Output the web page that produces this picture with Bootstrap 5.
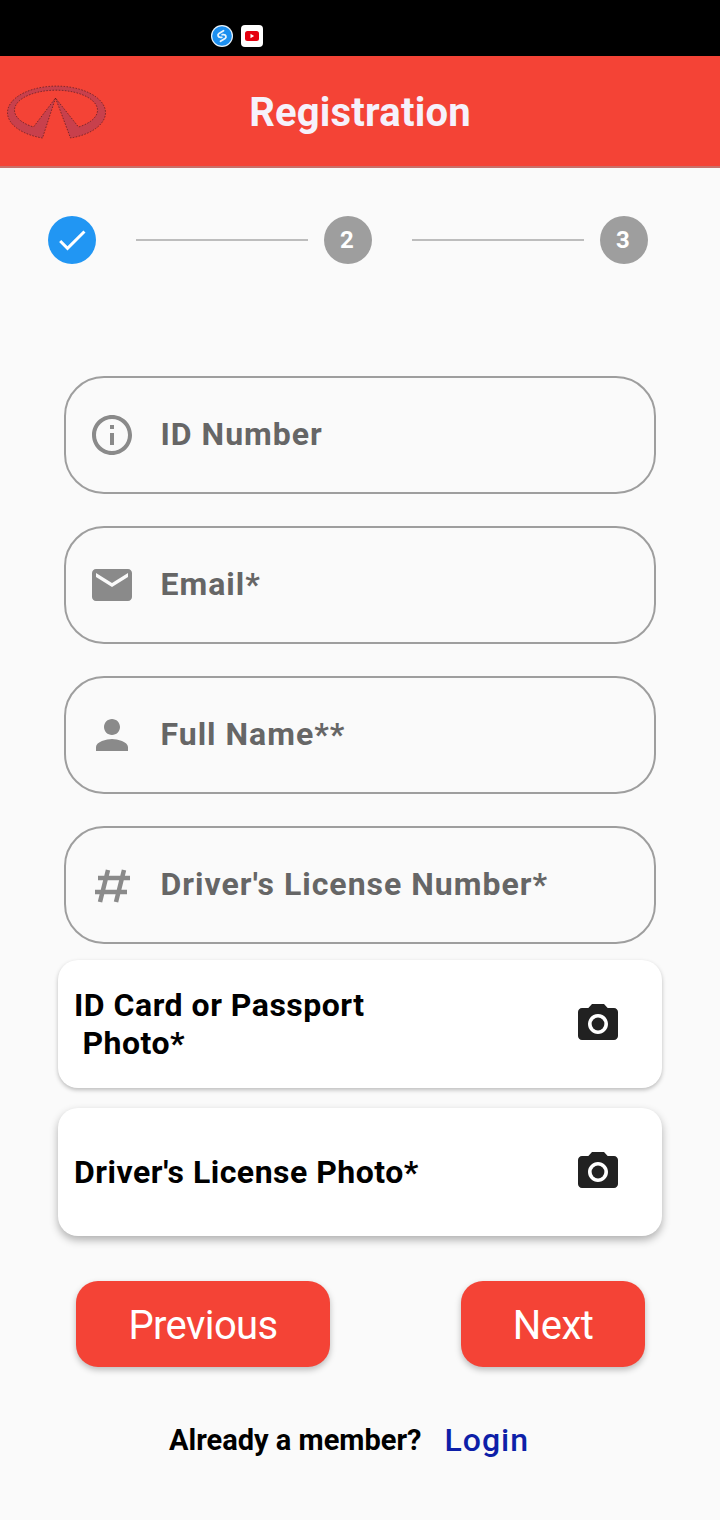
<!DOCTYPE html>
<html lang="en">
<head>
    <meta charset="utf-8">
    <title>Registration</title>
    <link rel="stylesheet" href="https://cdn.jsdelivr.net/npm/bootstrap@5.3.0/dist/css/bootstrap.min.css">
    <style>
        body { background: #fafafa; font-family: Roboto, "Liberation Sans", sans-serif; }
        .status-strip { height: 56px; background: #000; padding: 25px 0 0 211px; }
        .app-icon { width: 22px; height: 22px; display: block; }
        .app-head { height: 112px; background: #f44336; border-bottom: 2px solid #c9706a; display: grid; grid-template-columns: 1fr auto 1fr; align-items: center; }
        .app-logo { width: 113px; height: 112px; display: block; }
        .app-title { font-size: 40px; font-weight: 700; color: #f6f1fb; margin: 0 0 -2px; line-height: 1; letter-spacing: .2px; }
        .stepper { padding: 48px 72px 0 48px; }
        .step-dot { width: 48px; height: 48px; border-radius: 50%; background: #9e9e9e; color: #fff; font-size: 24px; font-weight: 700; flex: none; padding-right: 2px; }
        .step-dot.done { background: #2196f3; padding-right: 0; }
        .step-line { height: 2px; background: #bdbdbd; flex: 1; margin: 0 16px 0 40px; }
        .fields { padding: 112px 64px 0; gap: 32px; }
        .field-box { height: 118px; border: 2px solid #9e9e9e; border-radius: 40px; padding: 0 0 0 22px; gap: 24.5px; color: #8a8a8a; }
        .field-box svg { width: 48px; height: 48px; fill: currentColor; flex: none; }
        .field-text { font-size: 32px; font-weight: 700; color: #666; letter-spacing: 1px; margin: 0 0 2px; }
        .uploads { padding: 16px 58px 0; gap: 20px; }
        .upload-card { height: 128px; border: 0; border-radius: 20px; background: #fff; padding: 0 40px 0 16px; box-shadow: 0 2px 4px rgba(0,0,0,.25); }
        .upload-card.raised { box-shadow: 0 4px 8px rgba(0,0,0,.3); }
        .upload-card svg { width: 48px; height: 48px; fill: #212121; flex: none; }
        .upload-label { font-size: 32px; font-weight: 700; line-height: 38px; color: #000; letter-spacing: .5px; margin: 0; white-space: pre-wrap; }
        .actions { padding: 45px 75px 0 76px; }
        .act-btn { height: 86px; background: #f44336; color: #fff; border: 0; border-radius: 22px; font-size: 40px; line-height: 1; letter-spacing: -.6px; padding-top: 10px; box-shadow: 0 3px 6px rgba(0,0,0,.25); }
        .act-btn.prev { width: 254px; }
        .act-btn.next { width: 184px; }
        .member-row { padding: 49px 22px 0 0; gap: 23px; }
        .member-text { font-size: 29px; font-weight: 700; color: #000; }
        .member-link { font-size: 32px; font-weight: 500; color: #0d1fa8; letter-spacing: 1px; text-decoration: none; margin-bottom: 2px; }
    </style>
</head>
<body>
<div class="status-strip d-flex gap-2">
    <svg class="app-icon" viewBox="0 0 22 22">
        <circle cx="11" cy="11" r="11" fill="#e8f3fc"/>
        <circle cx="11" cy="11" r="9.800" fill="#1c8ff0"/>
        <path d="M12.500 5.800 8 8.500c-1.800 1.200-1 3.800 1.300 3.800h1.500M9.500 16.200l4.500-2.700c1.800-1.200 1-3.800-1.300-3.800h-1.500" fill="none" stroke="#e8f3fc" stroke-width="1.800" stroke-linecap="round"/>
    </svg>
    <svg class="app-icon" viewBox="0 0 22 22">
        <rect width="22" height="22" rx="4" fill="#fff"/>
        <rect x="4" y="6" width="14" height="10" rx="2.500" fill="#e5000f"/>
        <path d="M9.500 8.800v4.400l3.600-2.200z" fill="#fff"/>
    </svg>
</div>

<header class="app-head">
    <svg class="app-logo" viewBox="0 0 113 112">
        <path d="M55.500 42 42.500 82A49 26.500 0 1 1 70.500 82L55.500 42 78.500 71A41.500 20 0 1 0 33.500 71Z" fill="#c8404c" stroke="#3a1216" stroke-width=".6" stroke-dasharray="1.500 1.500"/>
    </svg>
    <h1 class="app-title">Registration</h1>
    <div></div>
</header>

<div class="stepper d-flex align-items-center">
    <div class="step-dot done d-flex align-items-center justify-content-center">
        <svg width="36" height="36" viewBox="0 0 24 24" fill="#fff"><path d="M9 16.170 4.830 12l-1.420 1.410L9 19 21 7l-1.410-1.410z"/></svg>
    </div>
    <div class="step-line"></div>
    <div class="step-dot d-flex align-items-center justify-content-center">2</div>
    <div class="step-line"></div>
    <div class="step-dot d-flex align-items-center justify-content-center">3</div>
</div>

<form class="fields d-flex flex-column">
    <div class="field-box d-flex align-items-center">
        <svg viewBox="0 0 24 24"><path d="M11 7h2v2h-2zm0 4h2v6h-2zm1-9C6.480 2 2 6.480 2 12s4.480 10 10 10 10-4.480 10-10S17.520 2 12 2zm0 18c-4.410 0-8-3.590-8-8s3.590-8 8-8 8 3.590 8 8-3.590 8-8 8z"/></svg>
        <label class="field-text">ID Number</label>
    </div>
    <div class="field-box d-flex align-items-center">
        <svg viewBox="0 0 24 24"><path d="M20 4H4c-1.100 0-1.990.9-1.990 2L2 18c0 1.100.9 2 2 2h16c1.100 0 2-.9 2-2V6c0-1.100-.9-2-2-2zm0 4-8 5-8-5V6l8 5 8-5v2z"/></svg>
        <label class="field-text">Email*</label>
    </div>
    <div class="field-box d-flex align-items-center">
        <svg viewBox="0 0 24 24"><path d="M12 12c2.210 0 4-1.790 4-4s-1.790-4-4-4-4 1.790-4 4 1.790 4 4 4zm0 2c-2.670 0-8 1.340-8 4v2h16v-2c0-2.660-5.330-4-8-4z"/></svg>
        <label class="field-text">Full Name**</label>
    </div>
    <div class="field-box d-flex align-items-center">
        <svg viewBox="0 0 48 48"><path d="M20 9 12 41M36 9 28 41M10 17H42M7 31H39" fill="none" stroke="currentColor" stroke-width="4.500"/></svg>
        <label class="field-text">Driver's License Number*</label>
    </div>
</form>

<div class="uploads d-flex flex-column">
    <div class="card upload-card flex-row align-items-center justify-content-between">
        <p class="upload-label">ID Card or Passport
 Photo*</p>
        <svg viewBox="0 0 24 24"><circle cx="12" cy="12" r="3.200"/><path d="M9 2 7.170 4H4c-1.100 0-2 .9-2 2v12c0 1.100.9 2 2 2h16c1.100 0 2-.9 2-2V6c0-1.100-.9-2-2-2h-3.170L15 2H9zm3 15c-2.760 0-5-2.240-5-5s2.240-5 5-5 5 2.240 5 5-2.240 5-5 5z"/></svg>
    </div>
    <div class="card upload-card raised flex-row align-items-center justify-content-between">
        <p class="upload-label">Driver's License Photo*</p>
        <svg viewBox="0 0 24 24"><circle cx="12" cy="12" r="3.200"/><path d="M9 2 7.170 4H4c-1.100 0-2 .9-2 2v12c0 1.100.9 2 2 2h16c1.100 0 2-.9 2-2V6c0-1.100-.9-2-2-2h-3.170L15 2H9zm3 15c-2.760 0-5-2.240-5-5s2.240-5 5-5 5 2.240 5 5-2.240 5-5 5z"/></svg>
    </div>
</div>

<div class="actions d-flex justify-content-between">
    <button type="button" class="btn act-btn prev">Previous</button>
    <button type="button" class="btn act-btn next">Next</button>
</div>

<div class="member-row d-flex justify-content-center align-items-center">
    <span class="member-text">Already a member?</span>
    <a href="#" class="member-link">Login</a>
</div>

<script src="https://cdn.jsdelivr.net/npm/bootstrap@5.3.0/dist/js/bootstrap.bundle.min.js"></script>
</body>
</html>
